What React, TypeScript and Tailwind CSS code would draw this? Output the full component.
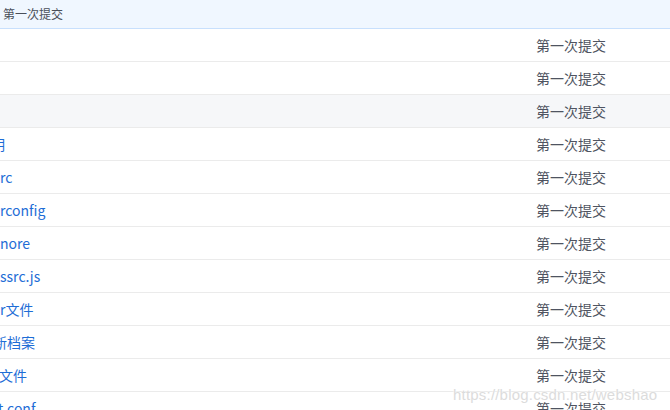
const rows: { name: string; shift: number; hover?: boolean }[] = [
  { name: "", shift: 0 },
  { name: "", shift: 0 },
  { name: "", shift: 0, hover: true },
  { name: "明", shift: -9 },
  { name: "rc", shift: 0 },
  { name: "rconfig", shift: 0 },
  { name: "nore", shift: 0 },
  { name: "ssrc.js", shift: 0 },
  { name: "r文件", shift: 0 },
  { name: "新档案", shift: -7 },
  { name: "文件", shift: -1 },
  { name: "t.conf", shift: -2 },
];

export default function App() {
  return (
    <div
      className="relative w-[670px] h-[410px] overflow-hidden bg-white"
      style={{ fontFamily: '"Noto Sans CJK SC", "Noto Sans", sans-serif' }}
    >
      <div className="h-[29px] bg-[#f0f7ff] border-b border-[#c8e0fd] flex items-center pl-[3px] text-[12px] text-[#4a4f5a]">
        第一次提交
      </div>
      {rows.map((r, i) => (
        <div
          key={i}
          className={`h-[33px] border-b border-[#ebebeb] flex items-center ${r.hover ? "bg-[#f6f7f9]" : "bg-white"}`}
        >
          <div className="w-[536px] overflow-hidden whitespace-nowrap text-[14px] text-[#1e6dd6]">
            <span className="inline-block" style={{ marginLeft: r.shift }}>
              {r.name}
            </span>
          </div>
          <div className="text-[14px] text-[#4f5461]">第一次提交</div>
        </div>
      ))}
      {/* watermark */}
      <div
        className="absolute left-[453px] top-[384px] text-[15px] text-[#dcdcdc] tracking-[0.2px]"
        style={{
          fontFamily: '"Liberation Sans", Arial, sans-serif',
          textShadow: "0 0 2px #fff, 0 0 1px #fff",
        }}
      >
        https://blog.csdn.net/webshao
      </div>
    </div>
  );
}
